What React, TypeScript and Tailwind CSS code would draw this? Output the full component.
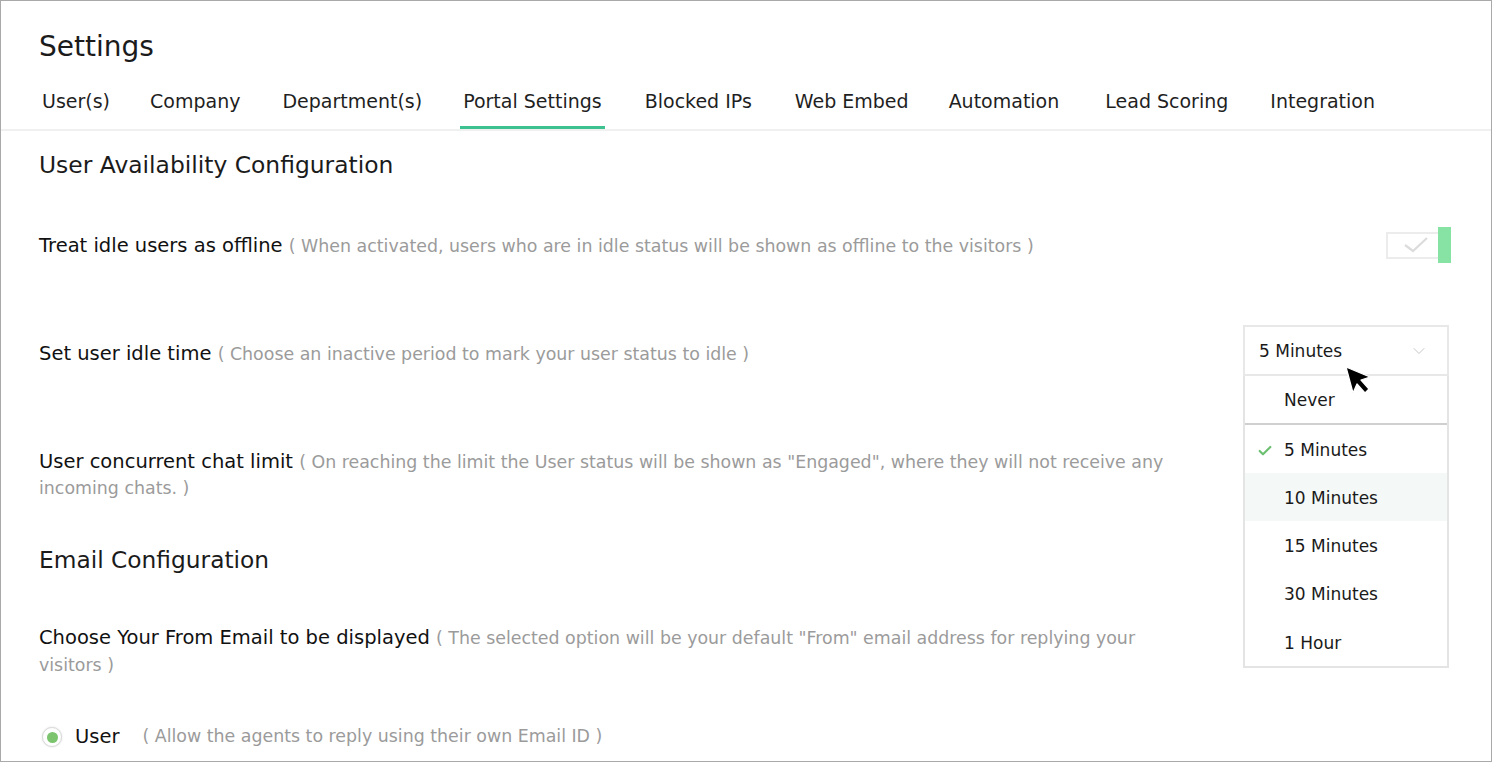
import { Check, ChevronDown } from "lucide-react";

const TABS = [
  { label: "User(s)", ml: "" },
  { label: "Company", ml: "ml-[34px]" },
  { label: "Department(s)", ml: "ml-[36px]" },
  { label: "Portal Settings", ml: "ml-[35px]" },
  { label: "Blocked IPs", ml: "ml-[37px]" },
  { label: "Web Embed", ml: "ml-[37px]" },
  { label: "Automation", ml: "ml-[34px]" },
  { label: "Lead Scoring", ml: "ml-[40px]" },
  { label: "Integration", ml: "ml-[36px]" },
];

const OPTIONS = ["5 Minutes", "10 Minutes", "15 Minutes", "30 Minutes", "1 Hour"];

const font = { fontFamily: '"DejaVu Sans", "Liberation Sans", sans-serif' };

function Hint({ children }: { children: React.ReactNode }) {
  return <span className="text-[17.4px] leading-[18px] text-[#9b9b9b]">{children}</span>;
}

function Toggle() {
  return (
    <div className="flex items-center">
      <div className="h-[27px] w-[52px] border-2 border-r-0 border-[#ececec]">
        <svg width="50" height="23" viewBox="0 0 50 23" fill="none">
          <path d="M17 11l8 6 14-13" stroke="#dcdcdc" strokeWidth="2.2" />
        </svg>
      </div>
      <div className="h-[36px] w-[13px] bg-[#86e3a4]" />
    </div>
  );
}

function IdleSelect() {
  return (
    <div className="relative mr-[2px] w-[206px]">
      <div className="flex h-[51px] items-center justify-between border-2 border-[#e8e8e8] pl-[14px] pr-[18px] text-[17px] text-[#1a1a1a]">
        <span className="pt-[2px]">5 Minutes</span>
        <ChevronDown size={20} strokeWidth={1.2} className="text-[#c8c8c8]" />
      </div>
      {/* open menu */}
      <div className="absolute left-0 top-full z-10 w-full border-2 border-t-0 border-[#e4e4e4] bg-white text-[17px] text-[#1a1a1a]">
        <div className="flex h-[49px] items-center border-b-2 border-[#d0d0d0] pl-[39px] pt-[2px]">Never</div>
        {OPTIONS.map((o, i) => (
          <div
            key={o}
            className={`relative flex items-center pl-[39px] pt-[4px] ${i === 4 ? "h-[49px]" : "h-[48px]"} ${
              i === 1 ? "bg-[#f4f9f7]" : ""
            }`}
          >
            {i === 0 && (
              <Check size={16} strokeWidth={3.2} className="absolute left-[12px] text-[#6cc070]" />
            )}
            {o}
          </div>
        ))}
      </div>
      {/* mouse pointer */}
      <svg
        className="absolute left-[101px] top-[40px] z-20"
        width="28"
        height="30"
        viewBox="0 0 28 30"
      >
        <path d="M2 2l24 10-9 3 8 9-4 4-8-9-4 9z" fill="#000" stroke="#fff" strokeWidth="1.3" strokeLinejoin="round" />
      </svg>
    </div>
  );
}

export default function App() {
  return (
    <div className="h-[762px] w-full overflow-hidden border border-[#a9a9a9] bg-white" style={font}>
      {/* Header */}
      <div className="border-b-2 border-[#f0f0f0] px-[38px]">
        <h1 className="pt-[29px] text-[28px] leading-[34px] text-[#1b1b1b]">Settings</h1>
        <nav className="mt-[25px] flex">
          {TABS.map((t) => (
            <div
              key={t.label}
              className={`border-b-[3px] px-[3px] pb-[13px] text-[19px] leading-[24px] text-[#1f1f1f] ${t.ml} ${
                t.label === "Portal Settings" ? "border-[#3ec191]" : "border-transparent"
              }`}
            >
              {t.label}
            </div>
          ))}
        </nav>
      </div>

      {/* Body */}
      <div className="pl-[38px] pr-[40px]">
        <h2 className="mt-[20px] text-[23.4px] leading-[28px] text-[#1b1b1b]">User Availability Configuration</h2>

        <div className="mt-[48px] flex items-center justify-between">
          <p className="pt-[1px] text-[19.5px] leading-[26px] text-[#111]">
            Treat idle users as offline{" "}
            <Hint>( When activated, users who are in idle status will be shown as offline to the visitors )</Hint>
          </p>
          <Toggle />
        </div>

        <div className="mt-[62px] flex items-center justify-between">
          <p className="pt-[6px] text-[19.5px] leading-[26px] text-[#111]">
            Set user idle time <Hint>( Choose an inactive period to mark your user status to idle )</Hint>
          </p>
          <IdleSelect />
        </div>

        <p className="mt-[73px] w-[1140px] text-[19.5px] leading-[26px] text-[#111]">
          User concurrent chat limit{" "}
          <Hint>
            ( On reaching the limit the User status will be shown as "Engaged", where they will not receive any
            incoming chats. )
          </Hint>
        </p>

        <h2 className="mt-[45px] text-[23.3px] leading-[28px] text-[#1b1b1b]">Email Configuration</h2>

        <p className="mt-[50px] w-[1140px] text-[19.5px] leading-[27px] text-[#111]">
          Choose Your From Email to be displayed{" "}
          <Hint>( The selected option will be your default "From" email address for replying your visitors )</Hint>
        </p>

        <div className="mt-[46px] flex items-center">
          <span className="ml-[3px] flex h-[20px] w-[20px] items-center justify-center rounded-full border border-[#dadada] bg-white shadow-[0_0_2px_rgba(0,0,0,0.15)]">
            <span className="h-[11px] w-[11px] rounded-full bg-[#7cc46e]" />
          </span>
          <span className="ml-[13px] text-[19.5px] leading-[26px] text-[#111]">User</span>
          <span className="ml-[23px]">
            <Hint>( Allow the agents to reply using their own Email ID )</Hint>
          </span>
        </div>
      </div>
    </div>
  );
}
